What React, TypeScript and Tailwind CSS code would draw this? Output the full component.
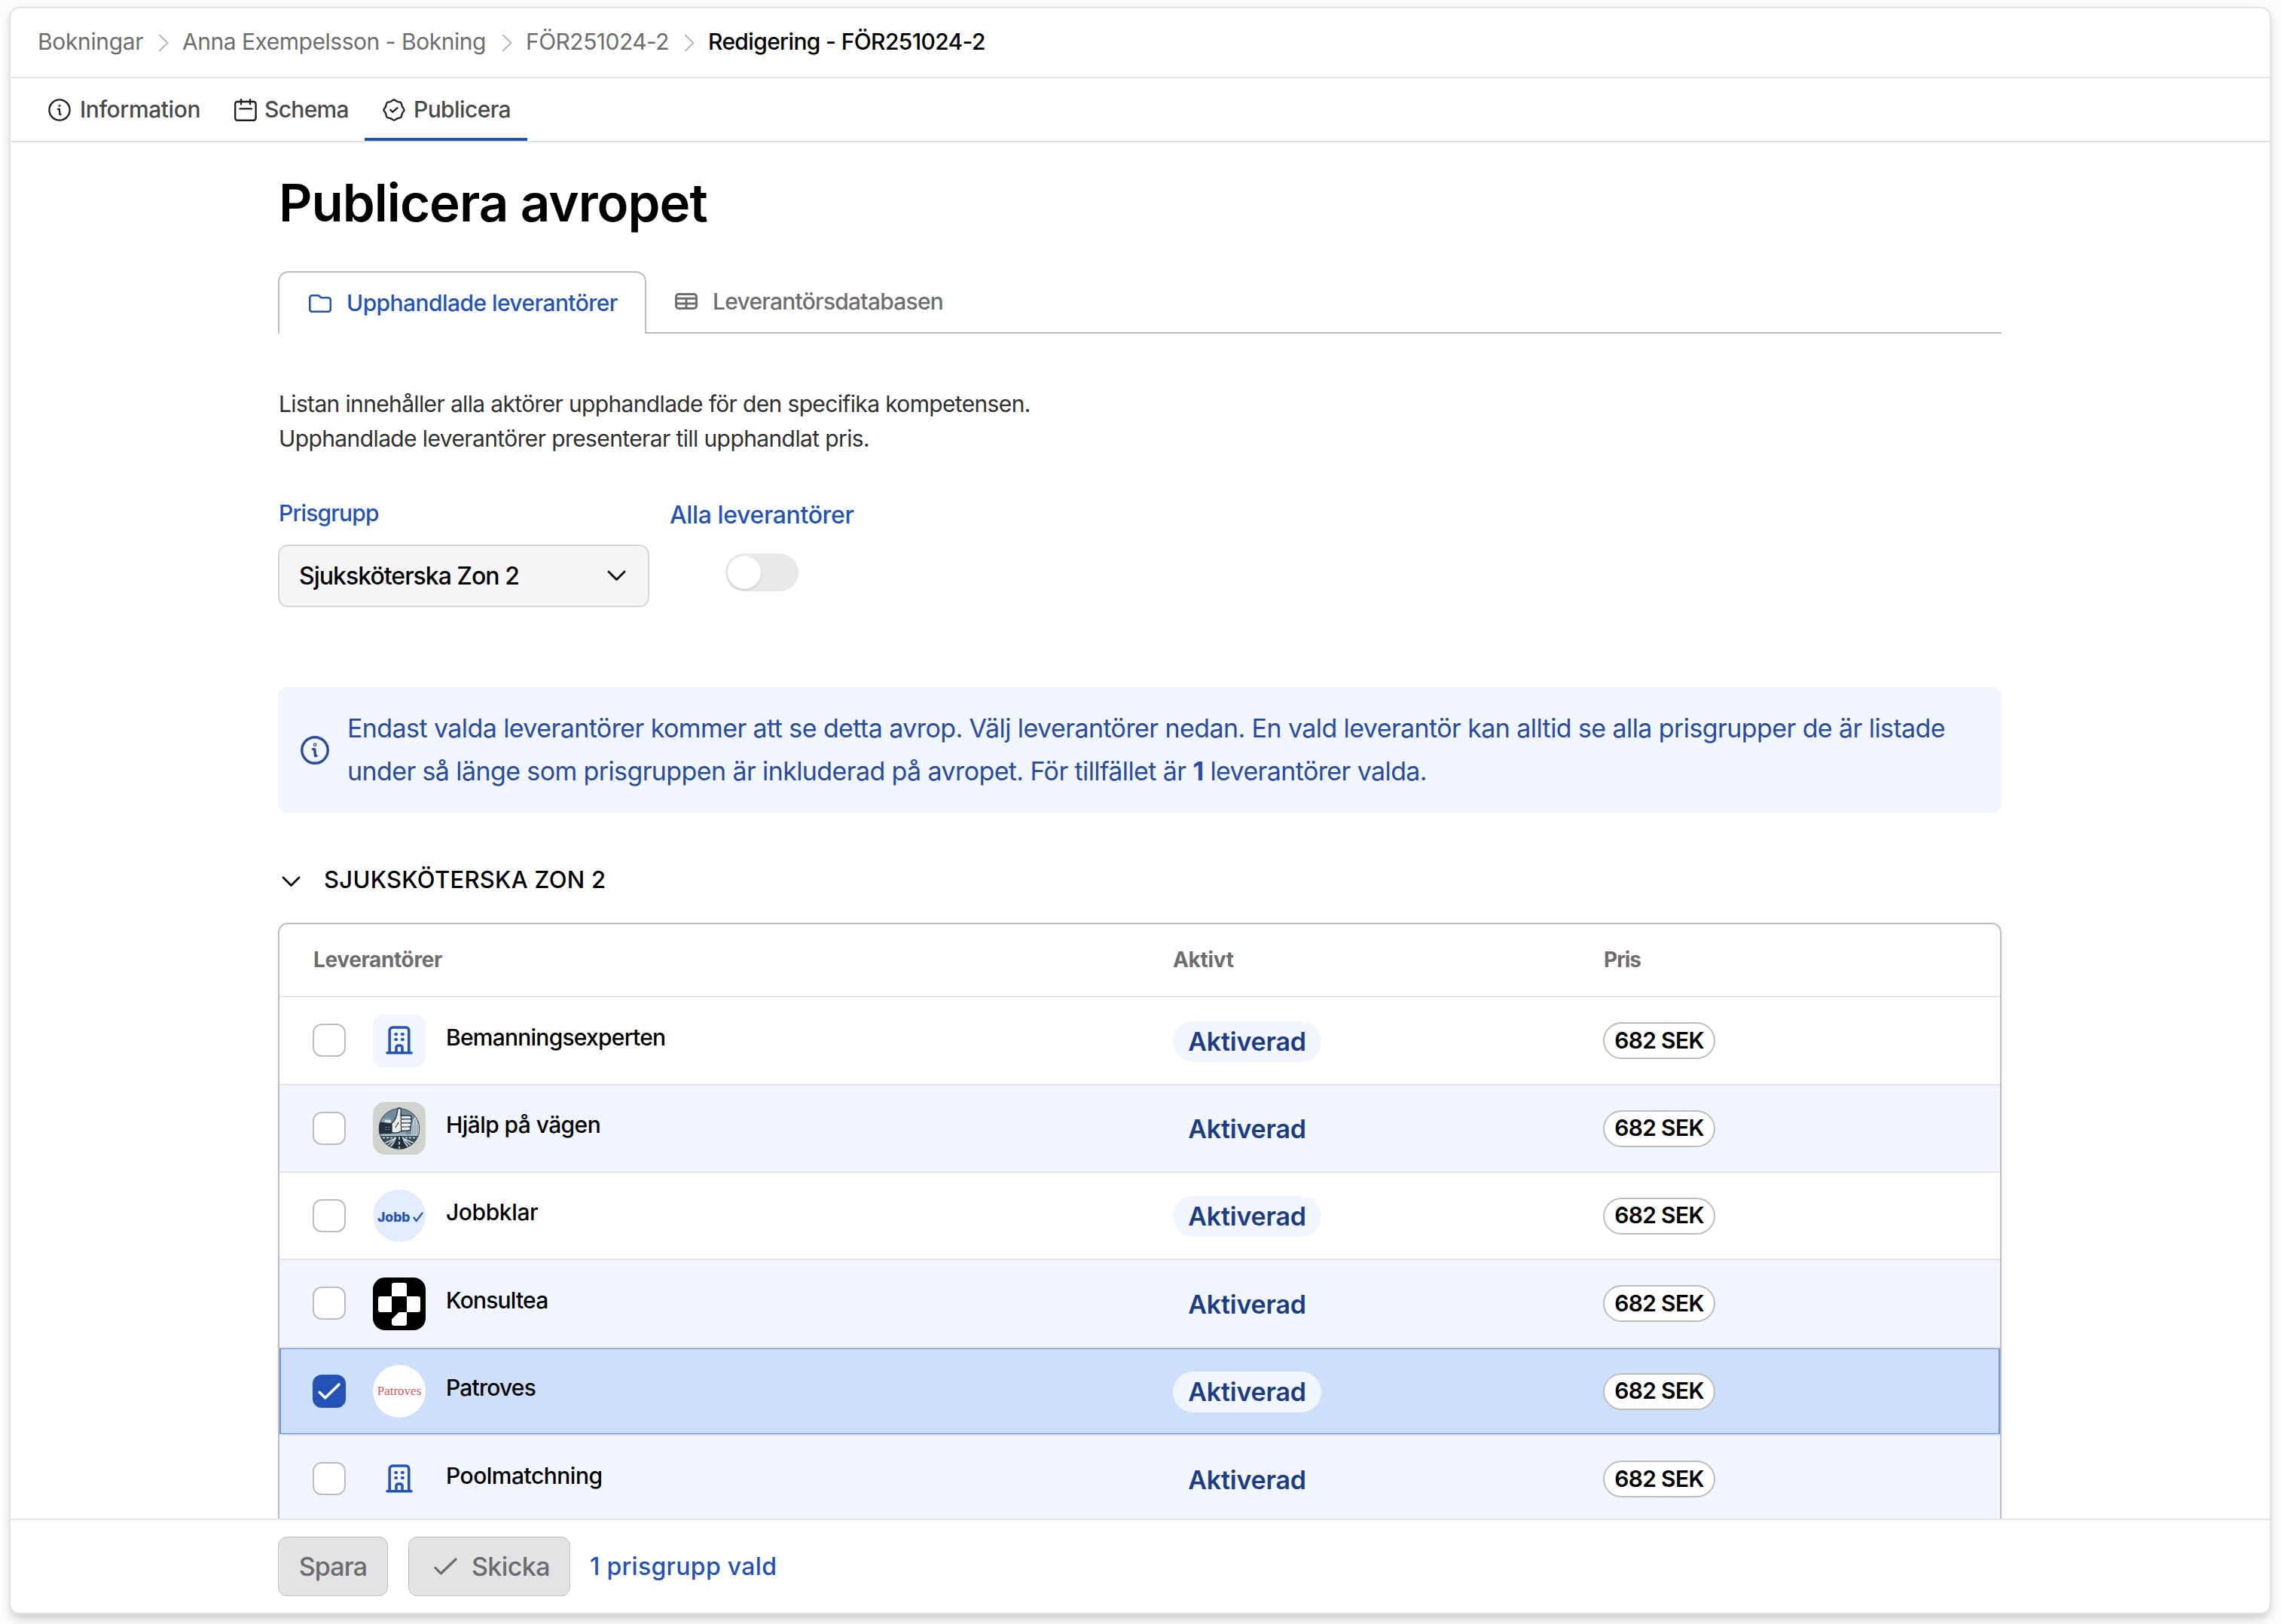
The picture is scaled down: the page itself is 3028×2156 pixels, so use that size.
import type { ReactNode } from "react";
import clsx from "clsx";

type Supplier = {
  name: string;
  tracking: string;
  height: string;
  logo: ReactNode;
  checked?: boolean;
};

function InfoIcon({ className, strokeWidth }: { className: string; strokeWidth: number }) {
  return (
    <svg className={className} viewBox="0 0 30 30" fill="none" stroke="currentColor" strokeWidth={strokeWidth} strokeLinecap="round" strokeLinejoin="round">
      <circle cx="15" cy="15" r="13.6" />
      <path d="M13 13.9h1.8l.6 6.9h1.2" />
      <circle cx="15" cy="9.3" r="0.5" />
    </svg>
  );
}

function CalendarIcon() {
  return (
    <svg className="h-[30px] w-[30px]" viewBox="0 0 30 30" fill="none" stroke="currentColor" strokeWidth="2.4" strokeLinecap="round">
      <rect x="1.2" y="4" width="27.4" height="24.8" rx="3" />
      <path d="M9 1.2v6M21 1.2v6M7.5 13.4h15.5" />
    </svg>
  );
}

function SealCheckIcon() {
  return (
    <svg className="h-[30px] w-[30px]" viewBox="0 0 30 30" fill="none" stroke="currentColor" strokeWidth="2.3" strokeLinecap="round" strokeLinejoin="round">
      <path d="M15 1.3c2 .5 2.7 2.1 4.7 2.7s3.600.4 4.6 1.5.8 2.7 1.5 4.6 2.4 3 2.900 4.900c-.5 2-2.200 3-2.900 4.900s-.4 3.600-1.500 4.700-2.700.8-4.600 1.500S17 28.300 15 28.700c-2-.4-2.700-2-4.700-2.600s-3.500-.4-4.600-1.500-.9-2.800-1.500-4.700S1.800 17 1.300 15c.5-1.900 2.300-3 2.900-4.900s.4-3.600 1.500-4.600 2.700-.9 4.600-1.500S13 1.800 15 1.300Z" />
      <path d="m10.2 14.8 2.9 3 6.5-5.6" />
    </svg>
  );
}

function FolderIcon() {
  return (
    <svg className="h-[24px] w-[30px]" viewBox="0 0 30 24" fill="none" stroke="currentColor" strokeWidth="2.6" strokeLinejoin="round">
      <path d="M1.300 4.200a3 3 0 0 1 3-3h7.500c.9 0 1.500.2 2.100.8l1.500 1.500c.5.5 1 .7 1.700.7h8.700a3 3 0 0 1 3 3v12.600a3 3 0 0 1-3 3H4.300a3 3 0 0 1-3-3Z" />
    </svg>
  );
}

function TableIcon() {
  return (
    <svg className="h-[22px] w-[30px]" viewBox="0 0 30 22" fill="none" stroke="currentColor" strokeWidth="2.9">
      <rect x="1.5" y="1.5" width="27" height="19" rx="3.5" />
      <path d="M1.5 7.300h27M1.5 14h27M15 7.300v13.200" />
    </svg>
  );
}

function CrumbSeparator() {
  return (
    <svg className="mt-[3px] h-[24px] w-[14px] text-[#b5b5b5]" viewBox="0 0 14 24" fill="none" stroke="currentColor" strokeWidth="2">
      <path d="M1.5 1.2 12.5 12 1.5 22.8" />
    </svg>
  );
}

function ChevronDown() {
  return (
    <svg className="h-[15px] w-[25px]" viewBox="0 0 25 15" fill="none" stroke="currentColor" strokeWidth="2.7" strokeLinecap="round" strokeLinejoin="round">
      <path d="m2 2 10.5 10.5L23 2" />
    </svg>
  );
}

function BuildingLogo() {
  return (
    <span className="flex h-[70px] w-[70px] items-center justify-center rounded-[14px] bg-[#f1f5fe] pb-[1px] text-[#2553b5]">
      <svg className="h-[38px] w-[36px]" viewBox="0 0 36 38" fill="none" stroke="currentColor" strokeWidth="3.6" strokeLinecap="round">
        <path d="M1.9 35.8h32.200M5.200 35V6a4 4 0 0 1 4-4h17.600a4 4 0 0 1 4 4v29" />
        <path d="M14 35v-6.500a2.500 2.500 0 0 1 2.500-2.500h3a2.500 2.500 0 0 1 2.500 2.500V35" />
        <path d="M13.2 11h1M21.8 11h1M13.2 18h1M21.8 18h1" strokeWidth="4" />
      </svg>
    </span>
  );
}

// Thumb over a road and skyline, inside a disc
function ThumbLogo() {
  return (
    <svg className="h-[70px] w-[70px] rounded-[16px]" viewBox="0 0 70 70">
      <rect width="70" height="70" fill="#d0d3ce" />
      <clipPath id="thumb-disc">
        <circle cx="35" cy="35.5" r="27" />
      </clipPath>
      <g clipPath="url(#thumb-disc)">
        <rect width="70" height="46" fill="#718b9d" />
        <path d="M8 46V32h4V22h6v-4h1v4h5v10h20v14Z" fill="#8fa5b2" />
        <path d="M16 24h8v5h-8z" fill="#dfe5e5" />
        <path d="M51 44V30l2-2v-3l2-4 1-4 1 4 2 4v3l3 2v14Z" fill="#c3d0d5" />
        <path d="M53 30v13M56 24v19M59 30v13" stroke="#718b9d" strokeWidth="1" />
        <rect y="43" width="70" height="27" fill="#354a5c" />
        <path d="M8 44h54" stroke="#e3e7e4" strokeWidth="1.5" />
        <path d="M8 47.500h54" stroke="#e3e7e4" strokeWidth="1.5" strokeDasharray="3 2" />
        <path d="M31 48 12 56M30 49 15 61M31 50 21 62M39 48l19 8M40 49l15 12M39 50l10 12" stroke="#d5dddd" strokeWidth="1.6" />
        <path d="M32.5 45h5l8.500 19H24Z" fill="#22313e" />
        <path d="M35 46v17" stroke="#f2f3ef" strokeWidth="1.5" strokeDasharray="4 2.5" />
        <path d="M8 26.5 25 28v14L8 42.5Z" fill="#22313e" />
        <path d="M17.5 33v5M21 33v5" stroke="#d5dddd" strokeWidth="1.2" strokeDasharray="1 2" />
      </g>
      <path d="M25 28c4-2 6-8 7-12l1-7c.3-2 4-2 4.200.5L37 18h11.500c3 0 3.500 4 1 4.700 2.600.6 2.500 4.600 0 5.200 2 .8 1.800 4.600-.5 5.100 1.800 1.300 1.200 4.600-1.500 4.800L38 38.500c-5 3.500-9 3-13 2Z" fill="#eceeea" stroke="#22313e" strokeWidth="1.3" />
      <path d="M38.5 22.7h11M38.5 27.900h11M38.5 33h10.500M38.5 18c-2 1.500-2 3.500 0 4.700-2 1.200-2 4 0 5.200-2 1-2 4 0 5.100-1.500 1-1.500 4 0 4.800M34 27c-1 3-3 4-4 7" fill="none" stroke="#22313e" strokeWidth="1.2" />
      <circle cx="35" cy="35.5" r="26.8" fill="none" stroke="#22313e" strokeWidth="0.8" />
    </svg>
  );
}

function JobbLogo() {
  return (
    <span className="flex h-[70px] w-[70px] items-center gap-[4px] rounded-full bg-[#e3ecfe] pt-[3px] pl-[6px] text-[#2553b5]">
      <span className="text-[17.5px] leading-none font-extrabold">Jobb</span>
      <svg className="h-[14px] w-[14px]" viewBox="0 0 14 14" fill="none" stroke="currentColor" strokeWidth="2.2" strokeLinecap="round">
        <path d="m1.5 7.5 3.2 4.500L12.500 1.500" />
      </svg>
    </span>
  );
}

function KonsulteaLogo() {
  return (
    <svg className="h-[70px] w-[70px] rounded-[16px]" viewBox="0 0 70 70">
      <rect width="70" height="70" fill="#000" />
      <g fill="#fff">
        <path d="M25 25V10a3 3 0 0 1 3-3h14a3 3 0 0 1 3 3v15Z" />
        <path d="M25 25v21H10a3 3 0 0 1-3-3V28a3 3 0 0 1 3-3Z" />
        <path d="M45 25h15a3 3 0 0 1 3 3v15a3 3 0 0 1-3 3H45Z" />
        <path d="M45 46v15a3 3 0 0 1-3 3H28a3 3 0 0 1-3-3v-5.500L34.500 46Z" />
      </g>
    </svg>
  );
}

function PatrovesLogo() {
  return (
    <span className="flex h-[70px] w-[70px] items-center justify-center rounded-full bg-white pb-[2px] font-['Liberation_Serif',serif] text-[17px] leading-none text-[#d6595c]">
      Patroves
    </span>
  );
}

const suppliers: Supplier[] = [
  { name: "Bemanningsexperten", tracking: "tracking-[-0.76px]", height: "h-[117px]", logo: <BuildingLogo /> },
  { name: "Hjälp på vägen", tracking: "tracking-[-0.58px]", height: "h-[116px]", logo: <ThumbLogo /> },
  { name: "Jobbklar", tracking: "tracking-[-0.4px]", height: "h-[116px]", logo: <JobbLogo /> },
  { name: "Konsultea", tracking: "tracking-[-0.8px]", height: "h-[117px]", logo: <KonsulteaLogo /> },
  { name: "Patroves", tracking: "tracking-[-0.8px]", height: "h-[116px]", logo: <PatrovesLogo />, checked: true },
  { name: "Poolmatchning", tracking: "tracking-[-0.5px]", height: "h-[117px]", logo: <BuildingLogo /> },
];

function Checkbox({ checked }: { checked?: boolean }) {
  if (checked) {
    return (
      <span className="h-[44px] w-[44px] rounded-[12px] bg-[#2553b5]">
        <svg className="h-[44px] w-[44px]" viewBox="0 0 44 44" fill="none" stroke="#fff" strokeWidth="3.6" strokeLinecap="round" strokeLinejoin="round">
          <path d="m9.3 23.5 7.4 7.3L35 13" />
        </svg>
      </span>
    );
  }
  return <span className="mb-px h-[44px] w-[44px] rounded-[12px] border-2 border-[#bdbdbf] bg-white" />;
}

function SupplierRow({ supplier, striped }: { supplier: Supplier; striped: boolean }) {
  return (
    <div
      className={clsx(
        "border-b-2 border-[#e3e3e5]",
        supplier.height,
        supplier.checked ? "bg-[#cedffb]" : striped ? "bg-[#f1f5fe]" : "bg-white",
      )}
    >
      <div
        className={clsx(
          "grid h-full grid-cols-[1186px_571px_1fr] items-center",
          supplier.checked &&
            "shadow-[inset_2px_0_0_#7094d9,inset_-2px_0_0_#7094d9,inset_0_1px_0_#7094d9,inset_0_-1px_0_#7094d9,inset_0_0_0_2px_#bdd2f7]",
        )}
      >
        <div className="flex items-center pl-[44px]">
          <Checkbox checked={supplier.checked} />
          <span className="ml-[36px]">{supplier.logo}</span>
          <span className={clsx("ml-[27px] pb-[10px] text-[30px] leading-[36px] font-medium text-black", supplier.tracking)}>
            {supplier.name}
          </span>
        </div>
        <div className="pt-[2px]">
          <span className="flex h-[54px] w-[197px] items-center justify-center rounded-full bg-[#f1f5fe] pb-[1px] text-[34px] font-semibold tracking-[-0.2px] text-[#1c3d82]">
            Aktiverad
          </span>
        </div>
        <div>
          <span className="flex h-[49px] w-[149px] items-center justify-center rounded-full border-2 border-[#bdbdbf] bg-white pb-[1px] text-[30px] font-semibold tracking-[-0.67px] text-black">
            682 SEK
          </span>
        </div>
      </div>
    </div>
  );
}

export default function App() {
  return (
    <div className="h-[2156px] w-[3028px] overflow-hidden bg-[#fbfbfb] pt-[9px] pl-[12px] font-['Inter',sans-serif] whitespace-nowrap">
      <div className="flex h-[2134px] w-[3003px] flex-col overflow-hidden rounded-[14px] border-2 border-[#e3e3e3] bg-white shadow-[0_8px_12px_-2px_rgba(0,0,0,0.16),0_2px_14px_rgba(0,0,0,0.04)]">
        <nav className="flex h-[93px] shrink-0 items-center border-b-2 border-[#e3e3e3] pb-[3px] pl-[36px] text-[30px] text-[#6e6e6e]">
          <span className="w-[160px] tracking-[-0.34px]">Bokningar</span>
          <CrumbSeparator />
          <span className="ml-[18px] w-[424px] tracking-[-0.48px]">Anna Exempelsson - Bokning</span>
          <CrumbSeparator />
          <span className="ml-[18px] w-[210px] tracking-[-0.53px]">FÖR251024-2</span>
          <CrumbSeparator />
          <span className="ml-[18px] font-medium tracking-[-0.64px] text-black">Redigering - FÖR251024-2</span>
        </nav>

        <div className="flex h-[85px] shrink-0 border-b-2 border-[#e3e3e3] pl-[29px] text-[30px] font-medium text-[#4a4a4a]">
          <div className="flex w-[225px] items-center pl-[21px]">
            <InfoIcon className="mr-[12px] h-[30px] w-[30px] text-[#1f1f1f]" strokeWidth={2.3} />
            <span className="tracking-[-0.4px]">Information</span>
          </div>
          <div className="flex w-[216px] items-center pl-[43px]">
            <span className="mr-[10px] text-[#1f1f1f]">
              <CalendarIcon />
            </span>
            <span className="tracking-[-0.7px]">Schema</span>
          </div>
          <div className="flex w-[216px] items-center border-b-4 border-[#2553b5] pt-[4px] pl-[24px]">
            <span className="mr-[11px] text-[#1f1f1f]">
              <SealCheckIcon />
            </span>
            <span className="tracking-[-0.6px]">Publicera</span>
          </div>
        </div>

        <main className="min-h-0 flex-1 overflow-hidden pl-[355px]">
          <div className="w-[2288px]">
            <h1 className="ml-px pt-[38px] text-[69px] leading-[84px] font-semibold tracking-[-1px] text-black">Publicera avropet</h1>

            <div className="mt-[49px] flex h-[83px] text-[30px]">
              <div className="flex w-[489px] items-center rounded-t-[14px] border-2 border-b-0 border-[#bdbdbf] pl-[39px] font-medium text-[#2553b5]">
                <FolderIcon />
                <span className="ml-[20px] tracking-[-0.57px]">Upphandlade leverantörer</span>
              </div>
              <div className="flex flex-1 items-center border-b-2 border-[#bdbdbf] pb-[1px] pl-[38px] text-[#6e6e6e]">
                <TableIcon />
                <span className="ml-[20px] font-medium tracking-[-0.76px]">Leverantörsdatabasen</span>
              </div>
            </div>

            <p className="mt-[70px] ml-px text-[30px] leading-[46px] text-[#303030]">
              <span className="tracking-[-0.65px]">Listan innehåller alla aktörer upphandlade för den specifika kompetensen.</span>
              <br />
              <span className="tracking-[-0.61px]">Upphandlade leverantörer presenterar till upphandlat pris.</span>
            </p>

            <div className="mt-[56px] flex gap-[27px]">
              <div className="w-[493px]">
                <div className="ml-px text-[30px] leading-[40px] font-medium tracking-[-0.84px] text-[#2553b5]">Prisgrupp</div>
                <div className="mt-[22px] flex h-[83px] items-center justify-between rounded-[13px] border-2 border-[#d6d6d8] bg-[#f5f5f7] pr-[29px] pl-[26px] text-[32px] font-medium tracking-[-0.98px] text-black">
                  Sjuksköterska Zon 2
                  <ChevronDown />
                </div>
              </div>
              <div className="flex flex-col items-center pt-[3px]">
                <div className="text-[32px] leading-[40px] font-medium tracking-[-0.38px] text-[#2553b5]">Alla leverantörer</div>
                <div className="mt-[31px] h-[50px] w-[97px] rounded-full bg-[#e8e8ea] p-[3px]">
                  <div className="h-[44px] w-[44px] rounded-full bg-white shadow-[0_2px_3px_rgba(0,0,40,0.12)]" />
                </div>
              </div>
            </div>

            <div className="mt-[106px] flex h-[167px] items-center rounded-[13px] bg-[#f1f5fd] pl-[30px] text-[#2a4c9c]">
              <InfoIcon className="h-[38px] w-[38px]" strokeWidth={2.7} />
              <p className="ml-[24px] pb-px text-[34px] leading-[57px]">
                <span className="tracking-[-0.59px]">
                  Endast valda leverantörer kommer att se detta avrop. Välj leverantörer nedan. En vald leverantör kan alltid se alla prisgrupper de är listade
                </span>
                <br />
                <span className="tracking-[-0.61px]">
                  under så länge som prisgruppen är inkluderad på avropet. För tillfället är <b>1</b> leverantörer valda.
                </span>
              </p>
            </div>

            <div className="mt-[69px] flex h-[40px] items-center pl-[5px] text-black">
              <span className="pt-[4px]">
                <ChevronDown />
              </span>
              <span className="ml-[31px] text-[31px] font-medium tracking-[0.29px]">SJUKSKÖTERSKA ZON 2</span>
            </div>

            <div className="mt-[37px] overflow-hidden rounded-t-[13px] border-2 border-b-0 border-[#bdbdbf] shadow-[0_2px_6px_rgba(0,0,0,0.06)]">
              <div className="grid h-[97px] grid-cols-[1186px_571px_1fr] items-center border-b-2 border-[#e3e3e5] pb-[2px] text-[28px] font-bold text-[#6e6e70]">
                <span className="pl-[45px] tracking-[-0.38px]">Leverantörer</span>
                <span className="tracking-[-0.3px]">Aktivt</span>
                <span className="pl-px tracking-[-1px]">Pris</span>
              </div>
              {suppliers.map((supplier, i) => (
                <SupplierRow key={supplier.name} supplier={supplier} striped={i % 2 === 1} />
              ))}
            </div>
          </div>
        </main>

        <footer className="flex h-[125px] shrink-0 items-center border-t-2 border-[#e3e3e3] pl-[355px] text-[34px] font-medium">
          <button className="h-[79px] w-[146px] rounded-[12px] border border-[#bdbdbf] bg-[#e3e3e5] tracking-[-0.9px] text-[#6b6b6d]">Spara</button>
          <button className="ml-[27px] flex h-[79px] w-[215px] items-center rounded-[12px] border border-[#bdbdbf] bg-[#e3e3e5] pl-[33px] text-[#6b6b6d]">
            <svg className="h-[23px] w-[31px]" viewBox="0 0 31 23" fill="none" stroke="currentColor" strokeWidth="3.2" strokeLinecap="round" strokeLinejoin="round">
              <path d="m2 13.5 7.3 7.5L29 2" />
            </svg>
            <span className="ml-[19px] tracking-[-0.6px]">Skicka</span>
          </button>
          <span className="ml-[26px] text-[32px] tracking-[0.3px] text-[#2553b5]">1 prisgrupp vald</span>
        </footer>
      </div>
    </div>
  );
}
